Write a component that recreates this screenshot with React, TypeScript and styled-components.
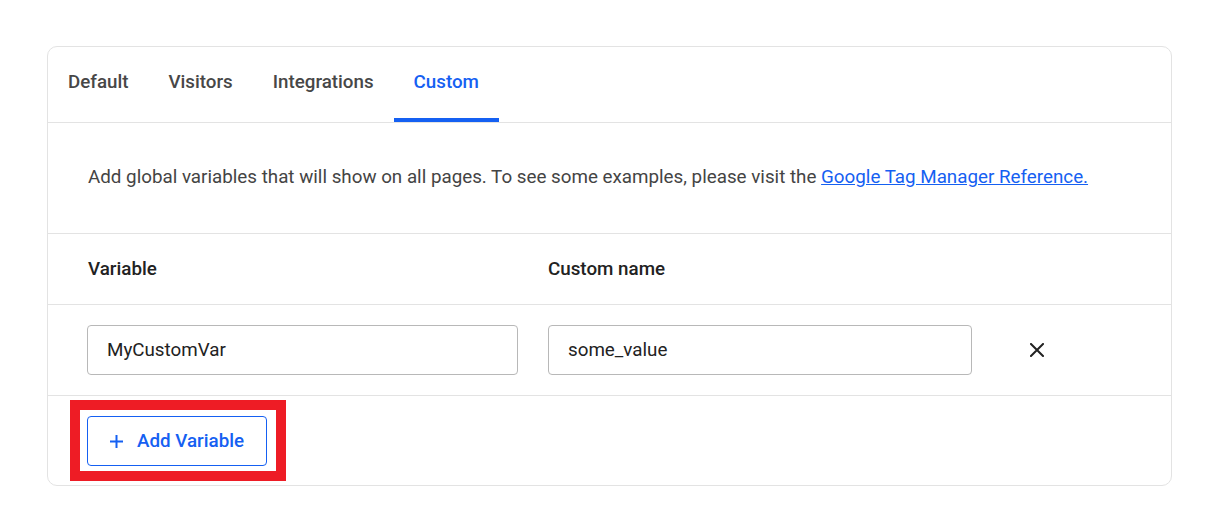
import React, { useState } from 'react';
import styled, { createGlobalStyle } from 'styled-components';

const GlobalStyle = createGlobalStyle`
  * { box-sizing: border-box; }
  body {
    margin: 0;
    background: #ffffff;
    font-family: Roboto, "Liberation Sans", Arial, sans-serif;
  }
`;

const tabs = ['Default', 'Visitors', 'Integrations', 'Custom'];

const App = () => {
  const [active, setActive] = useState('Custom');
  const [rows] = useState([{ variable: 'MyCustomVar', name: 'some_value' }]);

  return (
    <>
      <GlobalStyle />
      <Page>
        <Card>
          <TabBar>
            {tabs.map((t) => (
              <Tab key={t} $active={t === active} onClick={() => setActive(t)}>
                {t}
              </Tab>
            ))}
          </TabBar>

          <Intro>
            Add global variables that will show on all pages. To see some examples, please visit the{' '}
            <Link href="#">Google Tag Manager Reference.</Link>
          </Intro>

          <HeadRow>
            <HeadCell>Variable</HeadCell>
            <HeadCell>Custom name</HeadCell>
            <span />
          </HeadRow>

          {rows.map((r) => (
            <InputRow key={r.variable}>
              <TextInput defaultValue={r.variable} />
              <TextInput defaultValue={r.name} />
              <RemoveButton aria-label="Remove">
                <svg width="14" height="14" viewBox="0 0 14 14">
                  <path d="M1 1 L13 13 M13 1 L1 13" stroke="#222" strokeWidth="2" strokeLinecap="square" />
                </svg>
              </RemoveButton>
            </InputRow>
          ))}

          <Footer>
            <Highlight>
              <AddButton>
                <svg width="13" height="13" viewBox="0 0 13 13">
                  <path d="M6.5 0 V13 M0 6.5 H13" stroke="#1560f2" strokeWidth="2" />
                </svg>
                Add Variable
              </AddButton>
            </Highlight>
          </Footer>
        </Card>
      </Page>
    </>
  );
};

const Page = styled.div`
  padding: 46px 48px 46px 47px;
`;

const Card = styled.div`
  border: 1px solid #e3e3e3;
  border-radius: 10px;
  background: #fff;
  overflow: hidden;
`;

const TabBar = styled.div`
  display: flex;
  height: 76px;
  border-bottom: 1px solid #e3e3e3;
`;

const Tab = styled.button<{ $active?: boolean }>`
  background: none;
  border: none;
  padding: 0 20px 2px;
  margin: 0;
  font-family: inherit;
  font-size: 18.75px;
  font-weight: 500;
  cursor: pointer;
  color: ${(p) => (p.$active ? '#1560f2' : '#474747')};
  border-bottom: 4px solid ${(p) => (p.$active ? '#1560f2' : 'transparent')};
`;

const Intro = styled.p`
  margin: 0;
  padding: 43px 40px 45px;
  font-size: 18.8px;
  line-height: 22px;
  color: #444;
  border-bottom: 1px solid #e3e3e3;
`;

const Link = styled.a`
  color: #1560f2;
  text-decoration: underline;
`;

const HeadRow = styled.div`
  display: grid;
  grid-template-columns: 430px 424px 1fr;
  column-gap: 30px;
  align-items: center;
  height: 71px;
  padding: 0 40px;
  border-bottom: 1px solid #e3e3e3;
`;

const HeadCell = styled.div`
  font-size: 18.8px;
  font-weight: 500;
  color: #222;
`;

const InputRow = styled.div`
  display: grid;
  grid-template-columns: 431px 424px 1fr;
  column-gap: 30px;
  align-items: center;
  padding: 20px 40px 20px 39px;
  border-bottom: 1px solid #e3e3e3;
`;

const TextInput = styled.input`
  height: 50px;
  width: 100%;
  border: 1px solid #b8b8b8;
  border-radius: 4px;
  padding: 0 19px;
  font-family: inherit;
  font-size: 18.8px;
  color: #222;
  outline: none;
`;

const RemoveButton = styled.button`
  justify-self: start;
  margin-left: 28px;
  background: none;
  border: none;
  padding: 0;
  width: 14px;
  height: 14px;
  display: flex;
  cursor: pointer;
`;

const Footer = styled.div`
  display: flex;
  padding: 20px 39px 19px;
`;

const Highlight = styled.div`
  position: relative;
  &::after {
    content: '';
    position: absolute;
    top: -16px;
    left: -17px;
    right: -19px;
    bottom: -15px;
    border: 10px solid #ee1c25;
    pointer-events: none;
  }
`;

const AddButton = styled.button`
  display: flex;
  align-items: center;
  gap: 14px;
  height: 50px;
  width: 180px;
  padding: 0 0 0 22px;
  background: #fff;
  border: 1px solid #1560f2;
  border-radius: 4px;
  font-family: inherit;
  font-size: 18.8px;
  font-weight: 500;
  color: #1560f2;
  cursor: pointer;
`;

export default App;
